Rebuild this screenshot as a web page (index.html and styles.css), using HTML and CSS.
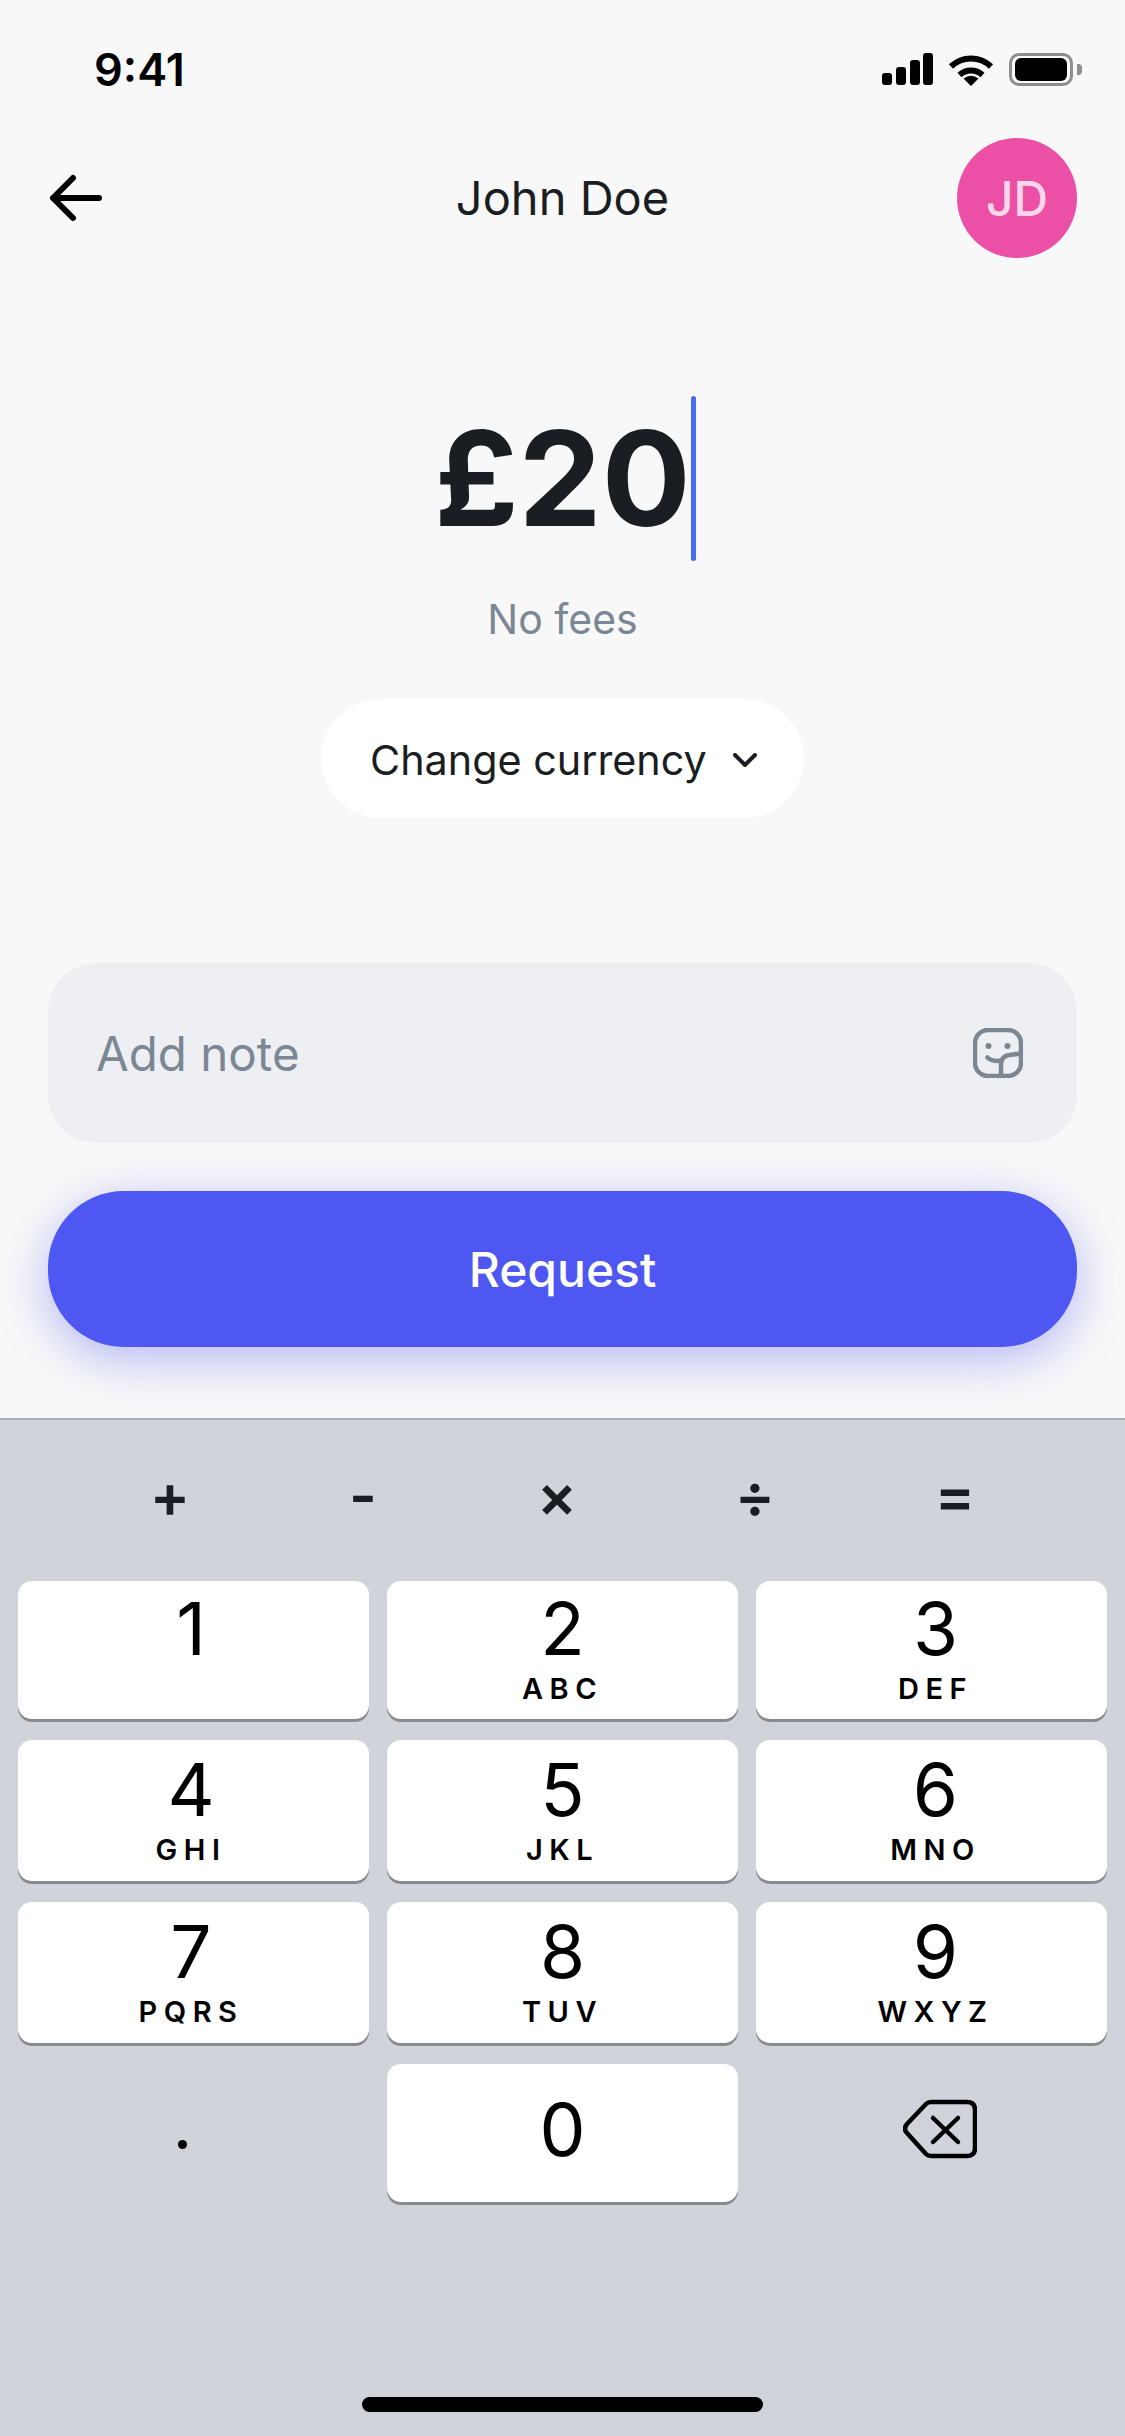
FILE: index.html
```html
<!DOCTYPE html>
<html lang="en">
<head>
    <meta charset="UTF-8">
    <title>Request money</title>
    <link rel="stylesheet" href="styles.css">
</head>
<body>
    <div class="screen">
        <!-- status bar -->
        <div class="statusBar">
            <span class="time">9:41</span>
            <div class="statusIcons">
                <svg width="51" height="32" viewBox="0 0 51 32">
                    <rect x="0" y="20" width="10" height="12" rx="3"/>
                    <rect x="14" y="14" width="10" height="18" rx="3"/>
                    <rect x="28" y="7" width="10" height="25" rx="3"/>
                    <rect x="41" y="0" width="10" height="32" rx="3"/>
                </svg>
                <svg width="46" height="33" viewBox="0 0 46 33">
                    <path class="wifiArc" d="M3 13.5a29 29 0 0 1 40 0"/>
                    <path class="wifiArc" d="M11.5 22a17 17 0 0 1 23 0"/>
                    <path d="M23 33l-7.5-7.5q7.500-5.500 15 0z"/>
                </svg>
                <div class="battery"><div class="batteryFill"></div></div>
            </div>
        </div>

        <!-- header -->
        <div class="header">
            <svg class="backIcon" width="56" height="48" viewBox="0 0 56 48">
                <path d="M51 24H5M25 4L5 24l20 20"/>
            </svg>
            <span class="title">John Doe</span>
            <div class="avatar">JD</div>
        </div>

        <!-- amount -->
        <div class="amount"><span class="amountText">£20<span class="caret"></span></span></div>
        <p class="fees">No fees</p>
        <div class="currency">
            <span>Change currency</span>
            <svg width="24" height="14" viewBox="0 0 24 14">
                <path d="M2 2l10 10L22 2"/>
            </svg>
        </div>

        <div class="note">
            <span>Add note</span>
            <svg width="50" height="50" viewBox="0 0 50 50">
                <rect x="2" y="2" width="46" height="46" rx="13"/>
                <circle class="eye" cx="15.500" cy="18" r="3"/>
                <circle class="eye" cx="34.500" cy="18" r="3"/>
                <path d="M14.500 29.500c3.500 3.500 8 4 13 3M28 48V37c0-6 3-9.500 8.500-10L48 25.500"/>
            </svg>
        </div>
        <button class="request">Request</button>
    </div>

    <!-- keyboard -->
    <div class="keyboard">
        <div class="mathRow">
            <span>+</span><span>-</span><span>×</span><span>÷</span><span>=</span>
        </div>
        <div class="keys">
            <div class="key leftKey"><span class="digit">1</span><span class="letters"></span></div>
            <div class="key"><span class="digit">2</span><span class="letters">ABC</span></div>
            <div class="key rightKey"><span class="digit">3</span><span class="letters">DEF</span></div>
            <div class="key leftKey"><span class="digit">4</span><span class="letters">GHI</span></div>
            <div class="key"><span class="digit">5</span><span class="letters">JKL</span></div>
            <div class="key rightKey"><span class="digit">6</span><span class="letters">MNO</span></div>
            <div class="key leftKey"><span class="digit">7</span><span class="letters">PQRS</span></div>
            <div class="key"><span class="digit">8</span><span class="letters">TUV</span></div>
            <div class="key rightKey"><span class="digit">9</span><span class="letters">WXYZ</span></div>
            <div class="dotKey"></div>
            <div class="key zeroKey"><span class="digit">0</span></div>
            <div class="backspace">
                <svg width="74" height="60" viewBox="0 0 74 60">
                    <path d="M28 3h36q8 0 8 8v38q0 8-8 8H28q-3 0-5-2L4 34q-4-4 0-9L23 5q2-2 5-2z"/>
                    <path d="M30 19l25 24M55 19L30 43"/>
                </svg>
            </div>
        </div>
        <div class="homeBar"></div>
    </div>
</body>
</html>
```

FILE: styles.css
```css
* {
    box-sizing: border-box;
}

body {
    font-family: 'Inter', 'Liberation Sans', sans-serif;
    background-color: #f8f8f8;
    color: #1a1d21;
    margin: 0;
    width: 1125px;
    height: 2436px;
    display: flex;
    flex-direction: column;
    overflow: hidden;
}

.screen {
    height: 1418px;
    flex-shrink: 0;
}

.statusBar {
    height: 138px;
    padding: 0 43px 0 94px;
    display: flex;
    align-items: center;
    justify-content: space-between;
}
.time {
    font-size: 45px;
    font-weight: 600;
    color: #000;
}
.statusIcons {
    display: flex;
    align-items: center;
    gap: 15px;
}
.wifiArc {
    fill: none;
    stroke: #000;
    stroke-width: 6;
}
.battery {
    width: 64px;
    height: 33px;
    border: 3px solid #8e8e8e;
    border-radius: 10px;
    padding: 2px 3px;
    margin-right: 9px;
    position: relative;
}
.battery::after {
    content: "";
    position: absolute;
    right: -12px;
    top: 8px;
    width: 5px;
    height: 11px;
    background-color: #8e8e8e;
    border-radius: 0 4px 4px 0;
}
.batteryFill {
    width: 100%;
    height: 100%;
    background-color: #000;
    border-radius: 6px;
}

.header {
    height: 120px;
    padding: 0 48px;
    display: grid;
    grid-template-columns: 1fr auto 1fr;
    align-items: center;
}
.backIcon path {
    fill: none;
    stroke: #000;
    stroke-width: 6;
    stroke-linecap: round;
    stroke-linejoin: round;
}
.title {
    font-size: 47px;
    line-height: 62px;
}
.avatar {
    justify-self: end;
    width: 120px;
    height: 120px;
    border-radius: 50%;
    background-color: #eb4fa6;
    color: #fbd5ea;
    font-size: 48px;
    font-weight: 500;
    display: flex;
    align-items: center;
    justify-content: center;
}

.amount {
    margin-top: 138px;
    height: 165px;
    text-align: center;
}
.amountText {
    position: relative;
    display: inline-block;
    font-size: 132px;
    font-weight: 700;
    line-height: 165px;
}
.caret {
    position: absolute;
    left: 100%;
    top: 0;
    width: 5px;
    height: 165px;
    border-radius: 3px;
    background-color: #4a6cf0;
}
.fees {
    margin: 33px 0 0;
    font-size: 41px;
    line-height: 50px;
    color: #7b8794;
    text-align: center;
}
.currency {
    margin: 55px auto 0;
    width: 483px;
    height: 119px;
    padding: 2px 0 0 49px;
    background-color: #fff;
    border-radius: 60px;
    font-size: 41.300px;
    display: flex;
    align-items: center;
    gap: 26px;
}
.currency svg path {
    fill: none;
    stroke: #1a1d21;
    stroke-width: 4;
    stroke-linecap: round;
    stroke-linejoin: round;
}

.note {
    margin: 145px 48px 0;
    height: 180px;
    padding: 0 54px 0 48px;
    background-color: #eeeff3;
    border-radius: 48px;
    font-size: 47.500px;
    color: #7b8794;
    display: flex;
    align-items: center;
    justify-content: space-between;
}
.note svg rect,
.note svg path {
    fill: none;
    stroke: #7c8791;
    stroke-width: 4.500;
    stroke-linecap: round;
}
.eye {
    fill: #7c8791;
}
.request {
    display: block;
    margin: 48px 48px 0;
    width: 1029px;
    height: 156px;
    border: none;
    border-radius: 76px;
    background-color: #4e57f1;
    color: #fff;
    font-family: inherit;
    font-size: 48px;
    font-weight: 500;
    box-shadow: 0 12px 48px rgba(78, 87, 241, 0.4);
}

.keyboard {
    flex: 1;
    background-color: #d0d3da;
    border-top: 2px solid #aeb0b6;
    display: flex;
    flex-direction: column;
    position: relative;
}
.mathRow {
    height: 161px;
    padding: 0 0 12px 73px;
    display: grid;
    grid-template-columns: 194px 192px 196px 200px 200px;
    align-items: center;
    font-size: 60px;
    font-weight: 600;
    line-height: 70px;
    color: #1a1d21;
}
.mathRow > span {
    text-align: center;
}
.keys {
    padding: 0 18px;
    display: grid;
    grid-template-columns: repeat(3, 351px);
    grid-template-rows: 138px 141px 141px 138px;
    column-gap: 18px;
    row-gap: 21px;
}
.key {
    background-color: #fff;
    border-radius: 14px;
    box-shadow: 0 3px 0 #898a8d;
    color: #000;
    display: flex;
    flex-direction: column;
    align-items: center;
    padding-top: 3px;
}
.key:nth-child(n+4) {
    padding-top: 5px;
}
.leftKey {
    padding-right: 5px;
}
.rightKey {
    padding-left: 8px;
}
.digit {
    font-size: 73px;
    line-height: 90px;
}
.letters {
    font-size: 29px;
    font-weight: 600;
    line-height: 30px;
    letter-spacing: 6.500px;
}
.key.zeroKey {
    padding-top: 21px;
}
.dotKey {
    display: flex;
    justify-content: center;
}
.dotKey::after {
    content: "";
    width: 9px;
    height: 9px;
    margin: 76px 22px 0 0;
    border-radius: 50%;
    background-color: #000;
}
.backspace {
    display: flex;
    justify-content: center;
    padding: 35px 0 0 16px;
}
.backspace svg path {
    fill: none;
    stroke: #000;
    stroke-width: 4.500;
    stroke-linecap: round;
    stroke-linejoin: round;
}
.homeBar {
    position: absolute;
    left: 362px;
    bottom: 24px;
    width: 401px;
    height: 15px;
    border-radius: 8px;
    background-color: #000;
}
```
